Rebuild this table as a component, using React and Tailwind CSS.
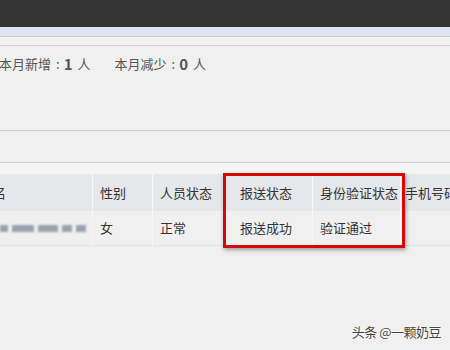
import React from "react"

const font = { fontFamily: '"Noto Sans CJK SC", "Noto Sans", sans-serif' }

const cols = [
  { w: "w-[93px]", head: "姓名", cell: null, pad: "pl-0" },
  { w: "w-[60px]", head: "性别", cell: "女", pad: "pl-[7px]" },
  { w: "w-[72px]", head: "人员状态", cell: "正常", pad: "pl-[7px]" },
  { w: "w-[88px]", head: "报送状态", cell: "报送成功", pad: "pl-[15px]" },
  { w: "w-[88px]", head: "身份验证状态", cell: "验证通过", pad: "pl-[7px]" },
  { w: "w-[60px]", head: "手机号码", cell: "", pad: "pl-[4px]" },
]

function BlurredName() {
  return (
    <div className="flex items-center gap-[4px] blur-[1.2px]">
      <div className="h-[7px] w-[8px] bg-gray-400" />
      <div className="h-[7px] w-[22px] bg-gray-400" />
      <div className="h-[7px] w-[20px] bg-gray-400" />
      <div className="h-[7px] w-[10px] bg-gray-400" />
      <div className="h-[7px] w-[10px] bg-gray-400" />
    </div>
  )
}

export default function App() {
  return (
    <div className="relative h-[350px] w-[450px] overflow-hidden bg-[#f0f0f0] text-[13px] text-[#333]" style={font}>
      <div className="h-[27px] bg-[#353535]" />
      <div className="h-[10px] border-b border-[#c9ccd1] bg-[#dee5f0]" />
      <div className="h-[9px] border-b border-[#d2d2d2] bg-[#f2f2f2]" />

      <div className="flex h-[36px] items-center text-[13px] text-[#555]">
        <span className="-ml-[1px]">本月新增</span>
        <span className="ml-[5px]">:</span>
        <span className="ml-[4px] text-[15px] font-bold">1</span>
        <span className="ml-[5px]">人</span>
        <span className="ml-[24px]">本月减少</span>
        <span className="ml-[5px]">:</span>
        <span className="ml-[4px] text-[15px] font-bold">0</span>
        <span className="ml-[5px]">人</span>
      </div>

      <div className="h-[49px] border-b border-[#cfcfcf]" />
      <div className="h-[32px] border-b border-[#cfcfcf]" />
      <div className="h-[11px] bg-[#f5f5f5]" />

      <div className="flex">
        {cols.map((c, i) => (
          <div key={i} className={`${c.w} shrink-0 border-r border-[#f7f7f7]`}>
            <div className={`flex h-[37px] items-center bg-[#e6e7eb] ${c.pad} whitespace-nowrap`}>
              {i === 0 ? <span className="-ml-[7px]">名</span> : c.head}
            </div>
            <div className={`flex h-[35px] items-center border-b border-[#e2e2e2] ${c.pad} whitespace-nowrap`}>
              {i === 0 ? <BlurredName /> : c.cell}
            </div>
          </div>
        ))}
      </div>

      <div className="absolute left-[223px] top-[173px] h-[75px] w-[182px] border-[3px] border-[#d10a0a] shadow-[1px_2px_4px_rgba(0,0,0,0.35)]" />

      <div
        className="absolute right-[9px] bottom-[9px] text-[13px] tracking-[-0.5px] text-[#444]"
        style={{ textShadow: "0 0 2px #fff, 0 0 2px #fff" }}
      >
        头条 @一颗奶豆
      </div>
    </div>
  )
}
